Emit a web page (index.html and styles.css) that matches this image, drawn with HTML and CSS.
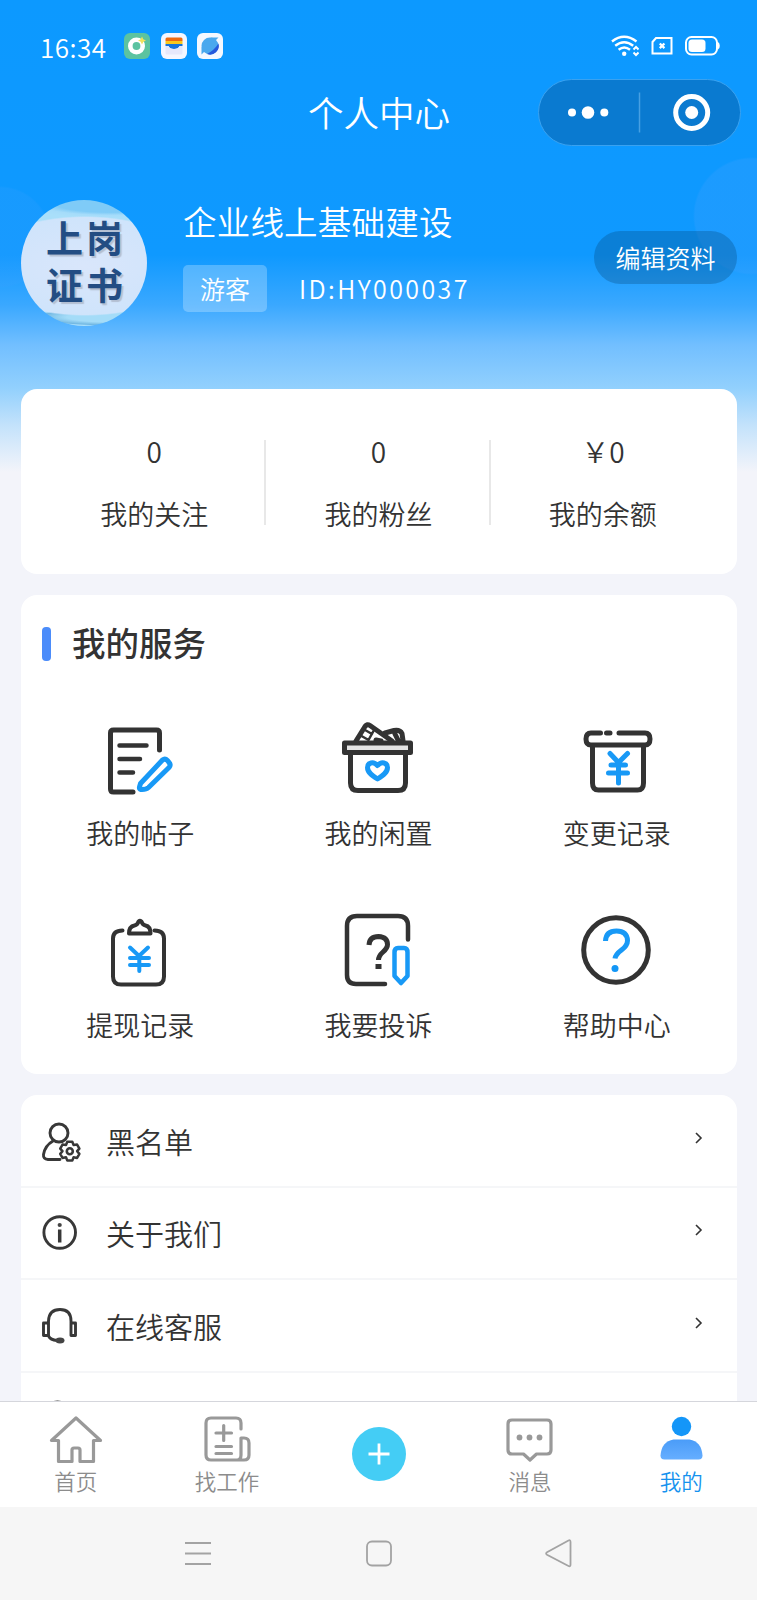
FILE: index.html
```html
<!DOCTYPE html>
<html lang="zh-CN">
  <head>
    <meta charset="utf-8" />
    <title>个人中心</title>
    <meta name="viewport" content="width=device-width, initial-scale=1" />
    <link rel="stylesheet" href="styles.css">
  </head>
  <body>
    <div class="app">
      <main class="page">
        <header class="status-bar">
          <span class="time">16:34</span>
          <div class="notices">
            <svg width="26" height="26" viewBox="0 0 26 26">
              <rect width="26" height="26" rx="6" fill="#5cc3a0" />
              <circle cx="12.500" cy="13" r="6.200" fill="none" stroke="#fff" stroke-width="4.600" />
              <path d="M18 3.500l1.300 2.700 2.700 1.300-2.700 1.300-1.300 2.700-1.300-2.700-2.700-1.300 2.700-1.300z" fill="#f2e25c" />
            </svg>
            <svg width="26" height="26" viewBox="0 0 26 26">
              <rect width="26" height="26" rx="6" fill="#f4f6ff" />
              <path d="M4.500 8V6q0-1.500 1.500-1.500h14q1.500 0 1.500 1.500v2z" fill="#ee6a10" />
              <path d="M4.500 8h17v3h-17z" fill="#fcc71c" />
              <path d="M4.500 11h17v2h-3q-1 3-5.500 3t-5.500-3h-3z" fill="#1873dc" />
              <path d="M4.500 13h3q1 3 5.500 3t5.500-3h3v7q0 1.500-1.500 1.500H6q-1.500 0-1.500-1.500z" fill="#e6e8fb" />
            </svg>
            <svg width="26" height="26" viewBox="0 0 26 26">
              <rect width="26" height="26" rx="6" fill="#f4f8ff" />
              <circle cx="13" cy="13" r="8.500" fill="#49a8ee" />
              <path d="M4.500 21.500V14M21.500 4.500H14l-9.500 10v7z" fill="#49a8ee" />
              <path d="M21.500 10.500a8.700 8.700 0 0 1-11.500 10.500q7-3.500 11.500-10.500z" fill="#2558dc" />
            </svg>
          </div>
          <div class="signals">
            <svg width="28" height="24" viewBox="0 0 28 24" fill="none" stroke="#fff" stroke-width="2.400">
              <path d="M1 7.500q12-9.500 24.500 0M4.200 11.700q9-7 18 0M7.600 15.700q5.600-4.500 11.400 0" />
              <circle cx="13.200" cy="19.700" r="2.200" fill="#fff" stroke="none" />
              <path d="M22.500 15.500l2.500-2.500 2.500 2.500M22.500 18.500l2.500 2.500 2.500-2.500" stroke-width="2" />
            </svg>
            <svg width="22" height="18" viewBox="0 0 22 18" fill="none" stroke="#fff" stroke-width="2">
              <path d="M5 1h15.500v15.500h-19V5z" />
              <path d="M8.800 6.500l4.600 4.600M13.400 6.500l-4.600 4.600" stroke-width="2.300" />
            </svg>
            <svg width="36" height="20" viewBox="0 0 36 20">
              <rect x="1" y="1" width="31" height="17.500" rx="5.500" fill="none" stroke="#fff" stroke-width="2" />
              <rect x="3.500" y="3.500" width="17" height="12.500" rx="3.500" fill="#fff" />
              <path d="M33 6q1.800 1 1.800 3.800T33 13.500z" fill="#fff" />
            </svg>
          </div>
        </header>

        <nav class="title-bar">
          <h1>个人中心</h1>
          <div class="capsule">
            <svg width="200" height="64" viewBox="0 0 200 64">
              <g fill="#fff">
                <circle cx="33" cy="32.500" r="4" />
                <circle cx="49" cy="32.500" r="6.300" />
                <circle cx="65.300" cy="32.500" r="4" />
                <circle cx="152.700" cy="32.500" r="6.500" />
              </g>
              <path d="M100.500 12.500v40" stroke="#47a0e3" stroke-width="1.500" />
              <circle cx="152.700" cy="32.500" r="16" fill="none" stroke="#fff" stroke-width="5" />
            </svg>
          </div>
        </nav>

        <section class="profile">
          <div class="avatar"><span>上岗</span><span>证书</span></div>
          <div class="user">
            <div class="user-name">企业线上基础建设</div>
            <div class="user-meta">
              <span class="tag">游客</span>
              <span class="user-id">ID:HY000037</span>
            </div>
          </div>
          <div class="edit">编辑资料</div>
        </section>

        <section class="card stats">
          <div class="stat"><span class="num">0</span><span>我的关注</span></div>
          <div class="stat"><span class="num">0</span><span>我的粉丝</span></div>
          <div class="stat"><span class="num">￥0</span><span>我的余额</span></div>
        </section>

        <section class="card services">
          <h2>我的服务</h2>
          <div class="grid">
            <div class="service">
              <svg class="icon" viewBox="0 0 80 80">
                <path d="M59.500 34V17q0-3-3-3h-43q-3 0-3 3v56q0 3 3 3H33" />
                <path d="M19.500 29.500h27M19.500 43H40M19.500 56.500h13.500" stroke-width="4.500" />
                <path class="blue" d="M40.500 67.500l22-23.500q2.500-2 5 .5l1.500 2q2.200 2.500 0 5l-20.500 20q-2.500 2.300-7.500 2-2-.5-1.500-2.500z" />
              </svg>
              <span>我的帖子</span>
            </div>
            <div class="service">
              <svg class="icon" viewBox="-1 0 80 80">
                <path d="M17 25L26 10.500q2-3 5-1l22 15.500M37 24l5 1M46 17l9-2.500q6-1 8 3l1 7M56 18l3 6" />
                <path d="M26 14l7 4M22.500 20l7 4M34.500 15l-5 9" stroke-width="2.500" />
                <path d="M5.500 27h66v9.500h-66z" fill="#e4e4e4" />
                <path d="M11.500 37v30q0 7.500 7.500 7.500h40q7.500 0 7.500-7.500V37" />
                <path class="blue" d="M38.500 63C33 59.500 28.500 56.500 28.500 51.500c0-5 6-6.500 10-2 4-4.500 10-3 10 2 0 5-4.500 8-10 11.500z" />
              </svg>
              <span>我的闲置</span>
            </div>
            <div class="service">
              <svg class="icon" viewBox="-1 0 80 80">
                <path d="M22.500 17H13q-5 0-5 6t5 6h54q5 0 5-6t-5-6H41M28.500 17h3.500" />
                <path d="M14.500 30v37q0 7 6 7h39q6 0 6-7V30" />
                <path class="blue" d="M32 37.500l8.500 9 9-9M33 49h14.500M30.500 57h19M40.500 47v20" />
              </svg>
              <span>变更记录</span>
            </div>
            <div class="service">
              <svg class="icon" viewBox="0 0 80 80">
                <path d="M22.500 22.500q-9.500 0-9.500 8v38q0 8 8 8h35q8 0 8-8v-38q0-8-9.500-8" stroke-width="4" />
                <path d="M29 25.500q0-7 5.500-8 3-.5 4-4 1-1.500 3 0 1 3.500 4 4 5 1 5 8z" stroke-width="4" />
                <path class="blue" d="M30 39.500l9 8.500 9-8.500M30 50h19M30 57h19M39.300 48v15" stroke-width="4" />
              </svg>
              <span>提现记录</span>
            </div>
            <div class="service">
              <svg class="icon" viewBox="-1 0 80 80">
                <path d="M69 31.500V18q0-10-10-10H18q-10 0-10 10v49q0 9 9 9h29" stroke-width="4.500" />
                <path d="M30 37q.5-8.500 9.500-8.500 9 .5 9 8 0 3.500-4.500 7.500t-4.500 8M36.500 58.500h6" stroke-linecap="butt" />
                <path class="blue" d="M55.500 44.500q0-4.500 3.500-4.500h6q3.500 0 3.500 4.500v23.500l-6.500 7-6.500-7z" stroke-width="4.500" />
              </svg>
              <span>我要投诉</span>
            </div>
            <div class="service">
              <svg class="icon" viewBox="-1 0 80 80">
                <circle cx="38" cy="42" r="32.300" />
                <path class="blue" d="M27.500 33q.5-10 11-10t11 9.500q0 5-6 9.500t-6.500 8.500" stroke-linecap="butt" />
                <circle cx="37" cy="60.500" r="3.500" fill="#1296f6" stroke="none" />
              </svg>
              <span>帮助中心</span>
            </div>
          </div>
        </section>

        <section class="card menu">
          <div class="row">
            <svg class="row-icon" viewBox="0 0 42 42">
              <circle cx="19" cy="12" r="9" />
              <path d="M20 38.500H8q-5-.5-4.500-5Q5 24.500 13 20" />
              <path d="M27.300 20.800h5l1.300 3.300 3.500-.5 2.300 4-2.300 2.600 2.300 2.700-2.300 4-3.500-.6-1.300 3.300h-5l-1.300-3.300-3.500.6-2.300-4 2.300-2.700-2.300-2.600 2.300-4 3.500.5z" stroke-width="2.500" />
              <circle cx="29.800" cy="30.200" r="3" stroke-width="2.600" />
            </svg>
            <span>黑名单</span>
            <svg class="arrow" viewBox="0 0 10 14"><path d="M2 2l5 5-5 5" /></svg>
          </div>
          <div class="row">
            <svg class="row-icon" viewBox="0 0 42 42">
              <circle cx="19.700" cy="19.500" r="15.800" />
              <circle cx="19.700" cy="12" r="2.100" fill="#444" stroke="none" />
              <path d="M19.700 16.500v13" stroke-width="3.500" stroke-linecap="butt" />
            </svg>
            <span>关于我们</span>
            <svg class="arrow" viewBox="0 0 10 14"><path d="M2 2l5 5-5 5" /></svg>
          </div>
          <div class="row">
            <svg class="row-icon" viewBox="0 0 42 42">
              <path d="M8.500 17v-2Q9 3.500 20 3.500T31 15v14.500H35.500V17H31M8.500 17H3.500v12.500h5zV30q2 4 8.500 4.500" />
              <ellipse cx="20" cy="34.500" rx="4.500" ry="3" fill="#444" stroke="none" />
            </svg>
            <span>在线客服</span>
            <svg class="arrow" viewBox="0 0 10 14"><path d="M2 2l5 5-5 5" /></svg>
          </div>
          <div class="row">
            <svg class="row-icon" viewBox="0 0 42 42">
              <circle cx="17.500" cy="19.500" r="15.500" />
            </svg>
          </div>
        </section>
      </main>

      <footer class="tab-bar">
        <div class="tab">
          <svg viewBox="0 0 56 50">
            <path d="M28 4L3.500 26.500H10.500V47.500H24V36q0-2 2-2h4q2 0 2 2v11.500h13.500V26.500H52.500z" />
          </svg>
          <span>首页</span>
        </div>
        <div class="tab">
          <svg viewBox="0 0 56 50">
            <path d="M42 15V9q0-5-5-5H12Q7 4 7 9v32q0 5 5 5h33q5 0 5-5V29q0-5-5-5h-3v17q0 5-4 5" />
            <path d="M17 19h15.500M24.700 11.500v15M17 32.500h15.500M17 39.500h15.500" />
          </svg>
          <span>找工作</span>
        </div>
        <div class="tab">
          <div class="plus">
            <svg viewBox="0 0 54 54"><path d="M16.500 27h21M27 16.500v21" /></svg>
          </div>
        </div>
        <div class="tab">
          <svg viewBox="0 0 56 50">
            <path d="M10 6h35q4 0 4 4v26q0 4-4 4H34.500L28 46l-6.500-6H10q-4 0-4-4v-26q0-4 4-4z" />
            <g fill="#999" stroke="none">
              <circle cx="17.500" cy="23.500" r="2.900" />
              <circle cx="27.500" cy="23.500" r="2.900" />
              <circle cx="37.500" cy="23.500" r="2.900" />
            </g>
          </svg>
          <span>消息</span>
        </div>
        <div class="tab active">
          <svg viewBox="0 0 56 50">
            <defs>
              <linearGradient id="me" x1="0" y1="0" x2="0" y2="1">
                <stop offset="0" stop-color="#4a9cf8" />
                <stop offset="1" stop-color="#66aeff" />
              </linearGradient>
            </defs>
            <circle cx="28.500" cy="12.500" r="9.700" fill="#1496f8" stroke="none" />
            <path d="M20.500 25.500h16q12 2 13 16 0 4-4 4H11.500q-4 0-4-4 1-14 13-16z" fill="url(#me)" stroke="none" />
          </svg>
          <span>我的</span>
        </div>
      </footer>

      <div class="system-nav">
        <svg viewBox="0 0 30 30"><path d="M1 4h26M1 14.500h26M1 25h26" /></svg>
        <svg viewBox="0 0 30 30"><rect x="3" y="2.500" width="24" height="24" rx="5" /></svg>
        <svg viewBox="0 0 30 30"><path d="M24.500 1.500q2-1 2 1.500v22.500q0 2.500-2 1.500L3 15.700q-1.800-1.200 0-2.500z" /></svg>
      </div>
    </div>
  </body>
</html>
```

FILE: styles.css
```css
* {
  box-sizing: border-box;
}
body {
  margin: 0;
  color: #333;
  font-family: "Noto Sans CJK SC", "Noto Sans", sans-serif;
  font-weight: 350;
  line-height: 1;
}
svg {
  display: block;
  flex: none;
}
.app {
  display: flex;
  flex-direction: column;
  height: 1600px;
  overflow: hidden;
}
.page {
  flex: 1;
  min-height: 0;
  overflow: hidden;
  background:
    radial-gradient(circle at 752px 216px, rgba(60, 160, 255, 0.3) 57px, transparent 59px),
    radial-gradient(circle at 0 237px, rgba(60, 160, 255, 0.2) 49px, transparent 51px),
    linear-gradient(#0c99ff 0, #0f99ff 255px, #3aa8ff 305px, #72bfff 345px, #92d0fd 388px, #c3e2fb 425px, #f3f4fa 472px);
}

.status-bar {
  display: flex;
  align-items: center;
  height: 79px;
  padding: 13px 36px 0 40px;
  color: #fff;
}
.time {
  width: 84px;
  padding-top: 1px;
  font-size: 26px;
  letter-spacing: 0.500px;
}
.notices {
  display: flex;
  gap: 10.500px;
}
.signals {
  display: flex;
  align-items: center;
  gap: 12px;
  margin-left: auto;
}

.title-bar {
  display: grid;
  grid-template-columns: 1fr auto 1fr;
  align-items: center;
  height: 67px;
  padding-right: 16px;
  padding-left: 17px;
}
.title-bar h1 {
  grid-column: 2;
  margin: 0;
  padding-bottom: 1px;
  color: #fff;
  font-size: 35.500px;
  font-weight: 350;
}
.capsule {
  justify-self: end;
  width: 203px;
  height: 67px;
  border: 1px solid #3aa2f0;
  border-radius: 34px;
  background: #0a7ad0;
}

.profile {
  display: flex;
  align-items: flex-start;
  height: 243px;
  padding: 54px 20px 0 21px;
  color: #fff;
}
.avatar {
  display: flex;
  flex-direction: column;
  align-items: center;
  justify-content: center;
  gap: 10px;
  width: 126px;
  height: 126px;
  padding: 0 0 4px 4px;
  border-radius: 50%;
  background:
    radial-gradient(ellipse 110px 50px at 64px 66px, #d9e6fb 0, #cfe4fb 97%, transparent 100%),
    radial-gradient(ellipse 90px 14px at 90px 4px, #7fcbf7 60%, #a5dcfa 80%, transparent 100%),
    radial-gradient(ellipse 90px 9px at 100px 117px, #a4dcf8 60%, #72b8e2 90%, transparent 100%),
    #a9dffa;
  color: #234d83;
  font-size: 37px;
  font-weight: 700;
  letter-spacing: 3px;
  text-shadow: 2px 2px 1px #b3bfd2;
}
.user {
  margin: 4px 0 0 36px;
}
.user-name {
  font-size: 33.500px;
  letter-spacing: 0.200px;
}
.user-meta {
  display: flex;
  align-items: center;
  gap: 32px;
  margin-top: 27px;
}
.tag {
  width: 84px;
  height: 47px;
  border-radius: 5px;
  background: rgba(255, 255, 255, 0.25);
  font-size: 25px;
  line-height: 47px;
  text-align: center;
}
.user-id {
  font-size: 25px;
  letter-spacing: 2.400px;
}
.edit {
  width: 143px;
  height: 53px;
  margin: 31px 0 0 auto;
  border-radius: 27px;
  background: rgba(0, 50, 90, 0.25);
  font-size: 25px;
  line-height: 52px;
  text-align: center;
}

.card {
  margin: 0 20px 21px 21px;
  border-radius: 16px;
  background: #fff;
}
.stats {
  display: flex;
  height: 185px;
  padding: 51px 22px 49px 21px;
}
.stat {
  display: flex;
  flex: 1 1 0;
  flex-direction: column;
  align-items: center;
  gap: 35px;
  margin-top: -3px;
  font-size: 27px;
  background: linear-gradient(#e8e8e8, #e8e8e8) no-repeat right bottom / 2px 85px;
}
.stat:last-child {
  background: none;
}
.num {
  font-size: 28px;
}

.services {
  height: 479px;
  padding-top: 32px;
}
.services h2 {
  display: flex;
  align-items: flex-start;
  gap: 21px;
  height: 34px;
  margin: 0 0 0 21px;
  font-size: 33.500px;
  font-weight: 500;
  line-height: 30px;
}
.services h2::before {
  content: "";
  width: 9px;
  height: 34px;
  border-radius: 4px;
  background: #4b8cfa;
}
.grid {
  display: grid;
  grid-template-columns: repeat(3, 1fr);
  grid-auto-rows: 192px;
  padding: 55px 1px 0 0;
}
.service {
  display: flex;
  flex-direction: column;
  align-items: center;
  gap: 23px;
  font-size: 27px;
}
.icon {
  width: 80px;
  height: 80px;
  fill: none;
  stroke: #333;
  stroke-width: 5;
  stroke-linecap: round;
  stroke-linejoin: round;
}
.icon .blue {
  stroke: #1899f6;
}

.row {
  display: flex;
  align-items: center;
  height: 92.500px;
  padding: 0 33px 0 19px;
  border-bottom: 2px solid #f5f6f8;
  font-size: 29px;
}
.row span {
  margin: 2px auto 0 24px;
}
.row-icon {
  width: 42px;
  height: 42px;
  margin-top: 3px;
  fill: none;
  stroke: #383838;
  stroke-width: 2.900;
  stroke-linecap: round;
  stroke-linejoin: round;
}
.arrow {
  width: 10px;
  height: 14px;
  margin-bottom: 5px;
  fill: none;
  stroke: #333;
  stroke-width: 1.600;
}

.tab-bar {
  display: flex;
  flex: none;
  height: 106px;
  border-top: 1px solid #d5d6dc;
  background: #fff;
}
.tab {
  display: flex;
  flex: 1;
  flex-direction: column;
  align-items: center;
  gap: 6px;
  padding-top: 12px;
  color: #8c8c8c;
  font-size: 21.500px;
}
.tab > svg {
  width: 56px;
  height: 50px;
  fill: none;
  stroke: #999;
  stroke-width: 3.200;
  stroke-linecap: round;
  stroke-linejoin: round;
}
.tab.active {
  color: #1592ee;
}
.plus {
  width: 54px;
  height: 54px;
  margin-top: 13px;
  border-radius: 50%;
  background: #44cdf5;
}
.plus path {
  stroke: #fff;
  stroke-width: 2.800;
}

.system-nav {
  display: flex;
  flex: none;
  justify-content: center;
  gap: 150px;
  height: 93px;
  padding-top: 32px;
  background: #f6f6f6;
}
.system-nav svg {
  width: 30px;
  height: 30px;
  fill: none;
  stroke: #a3a3a3;
  stroke-width: 1.800;
}
```
